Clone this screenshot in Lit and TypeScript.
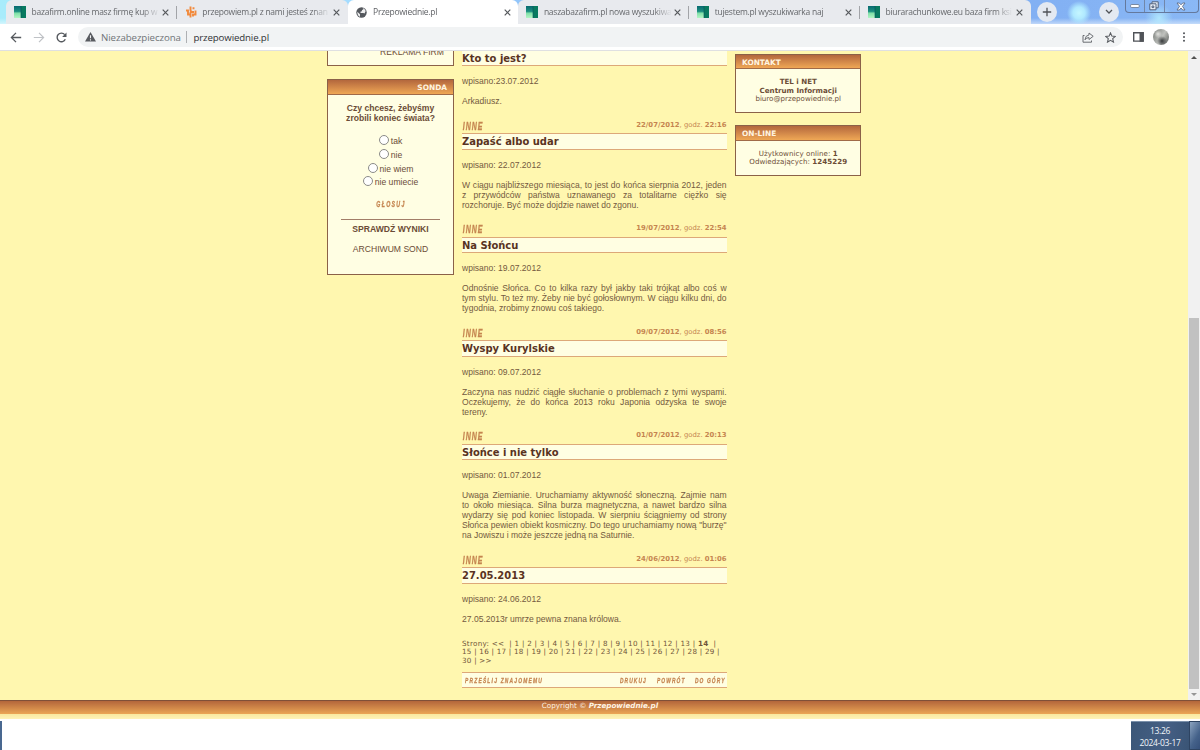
import { LitElement, css, html, nothing } from 'lit'
import { customElement, property } from 'lit/decorators.js'
import { classMap } from 'lit/directives/class-map.js'
import { when } from 'lit/directives/when.js'

const squaresIcon = html`<svg width="12" height="12" viewBox="0 0 12 12">
  <defs><linearGradient id="g" x1="0" y1="0" x2="0" y2="1"><stop offset="0" stop-color="#086a70"/><stop offset=".45" stop-color="#1d8f80"/><stop offset=".6" stop-color="#7fe0a8"/><stop offset="1" stop-color="#b4f5c4"/></linearGradient></defs>
  <path fill="url(#g)" d="M0 0h7v12H0z"/><path fill="#087a60" d="M7 0h5v12H7z"/><path fill="#06555a" d="M6.500 0h1v12h-1z" opacity=".6"/>
</svg>`
const swirlIcon = html`<svg width="12" height="12" viewBox="0 0 12 12" fill="none" stroke="#f28a3c" stroke-width="1.900">
  <path d="M5.500 0.500v3.500q0 2 2 2h1.500M1 4.500h2v4h2.500M5.500 6v5.500M8 7.500v3M10.500 4.500v4H8M8.500 1.200v2"/>
</svg>`
const globeIcon = html`<svg width="11" height="11" viewBox="0 0 11 11">
  <circle cx="5.500" cy="5.500" r="5.200" fill="#54585d"/>
  <path fill="#fff" d="M1.300 4.800 4 7.300v2.500Q1.400 9 1.300 4.800zM6.800 1.100Q9 2 9.700 4L8.500 6.500 7.300 6 5 5.900 4 4.900l1.800-.6.200-1.200 1.300-.6z" opacity=".9"/>
</svg>`
const closeIcon = html`<svg width="7" height="7" viewBox="0 0 7 7" stroke="#55585c" stroke-width="1.200"><path d="M.7.7l5.600 5.600M6.300.7.7 6.300"/></svg>`

interface Tab {
  icon: unknown
  title: string
  active?: boolean
  divider?: boolean
  left?: boolean
  right?: boolean
}

const tabs: Tab[] = [
  { icon: squaresIcon, title: 'bazafirm.online masz firmę kup w', divider: true, left: true },
  { icon: swirlIcon, title: 'przepowiem.pl z nami jesteś znan', right: true },
  { icon: globeIcon, title: 'Przepowiednie.pl', active: true },
  { icon: squaresIcon, title: 'naszabazafirm.pl nowa wyszukiwa', divider: true, left: true },
  { icon: squaresIcon, title: 'tujestem.pl wyszukiwarka naj', divider: true },
  { icon: squaresIcon, title: 'biurarachunkowe.eu baza firm ksi', right: true },
]

interface Entry {
  title: string
  date?: string
  hour?: string
  added: string
  lines: string[]
}

const entries: Entry[] = [
  { title: 'Kto to jest?', added: 'wpisano:23.07.2012', lines: ['Arkadiusz.'] },
  {
    title: 'Zapaść albo udar', date: '22/07/2012', hour: '22:16', added: 'wpisano: 22.07.2012',
    lines: ['W ciągu najbliższego miesiąca, to jest do końca sierpnia 2012, jeden', 'z przywódców państwa uznawanego za totalitarne ciężko się', 'rozchoruje. Być może dojdzie nawet do zgonu.'],
  },
  {
    title: 'Na Słońcu', date: '19/07/2012', hour: '22:54', added: 'wpisano: 19.07.2012',
    lines: ['Odnośnie Słońca. Co to kilka razy był jakby taki trójkąt albo coś w', 'tym stylu. To też my. Żeby nie być gołosłownym. W ciągu kilku dni, do', 'tygodnia, zrobimy znowu coś takiego.'],
  },
  {
    title: 'Wyspy Kurylskie', date: '09/07/2012', hour: '08:56', added: 'wpisano: 09.07.2012',
    lines: ['Zaczyna nas nudzić ciągłe słuchanie o problemach z tymi wyspami.', 'Oczekujemy, że do końca 2013 roku Japonia odzyska te swoje', 'tereny.'],
  },
  {
    title: 'Słońce i nie tylko', date: '01/07/2012', hour: '20:13', added: 'wpisano: 01.07.2012',
    lines: ['Uwaga Ziemianie. Uruchamiamy aktywność słoneczną. Zajmie nam', 'to około miesiąca. Silna burza magnetyczna, a nawet bardzo silna', 'wydarzy się pod koniec listopada. W sierpniu ściągniemy od strony', 'Słońca pewien obiekt kosmiczny. Do tego uruchamiamy nową "burzę"', 'na Jowiszu i może jeszcze jedną na Saturnie.'],
  },
  { title: '27.05.2013', date: '24/06/2012', hour: '01:06', added: 'wpisano: 24.06.2012', lines: ['27.05.2013r umrze pewna znana królowa.'] },
]

@customElement('news-entry')
export class NewsEntry extends LitElement {
  @property({ attribute: false }) entry!: Entry

  render() {
    const { title, date, hour, added, lines } = this.entry
    return html`
      ${when(date, () => html`
        <div class="head">
          <span class="category">INNE</span>
          <span class="date"><b>${date}</b>, godz. <b>${hour}</b></span>
        </div>`)}
      <div class="title">${title}</div>
      <div class="body">
        <p class="line added">${added}</p>
        ${lines.map((line, i) => html`<p class=${classMap({ line: true, full: i < lines.length - 1 })}>${line}</p>`)}
      </div>
    `
  }

  static styles = css`
    :host { display: block; padding-bottom: 11.6px; }
    .head {
      display: flex;
      justify-content: space-between;
      height: 15.3px;
      color: #c58550;
    }
    .category {
      font: italic bold 10.600px/17px "Liberation Sans", sans-serif;
      letter-spacing: 1.600px;
      padding-left: 1px;
      transform: scaleX(.66);
      transform-origin: left;
      -webkit-text-stroke: .3px #c58550;
    }
    .date { font: 6.860px/15px "DejaVu Sans", sans-serif; white-space: nowrap; }
    .title {
      box-sizing: border-box;
      height: 16.6px;
      border: solid #dda878;
      border-width: 1px 0;
      background: #fffee2;
      color: #59331f;
      font: bold 9.980px/15.800px "DejaVu Sans", sans-serif;
    }
    .body { padding-top: 10.050px; color: #745a40; }
    .line { margin: 0; font: 8.560px/10px "Liberation Sans", sans-serif; white-space: nowrap; }
    .added { margin-bottom: 10px; }
    .full { text-align: justify; text-align-last: justify; white-space: normal; }
  `
}

@customElement('side-box')
export class SideBox extends LitElement {
  @property() heading = ''
  @property() align = 'left'

  render() {
    return html`
      ${this.heading ? html`<div class=${classMap({ heading: true, right: this.align === 'right' })}>${this.heading}</div>` : nothing}
      <slot></slot>
    `
  }

  static styles = css`
    :host {
      display: block;
      box-sizing: border-box;
      border: 1px solid #8b6148;
      background: #fffee3;
      color: #6b4c36;
      text-align: center;
    }
    .heading {
      box-sizing: border-box;
      height: 14.500px;
      padding: 0 6px;
      border-bottom: 1px solid #a06a48;
      background: linear-gradient(#b3673d, #efa755);
      color: #fff5e0;
      font: bold 7.400px/15.500px "DejaVu Sans", sans-serif;
      text-align: left;
    }
    .right { text-align: right; }
  `
}

@customElement('browser-chrome')
export class BrowserChrome extends LitElement {
  renderTab(tab: Tab) {
    return html`<div class=${classMap({ tab: true, active: !!tab.active, divider: !!tab.divider, left: !!tab.left, right: !!tab.right })}>
      <span class="favicon">${tab.icon}</span>
      <span class="name">${tab.title}</span>
      <span class="close">${closeIcon}</span>
    </div>`
  }

  render() {
    return html`
      <div class="strip">
        ${tabs.map(tab => this.renderTab(tab))}
        <span class="round plus"><svg width="10" height="10" viewBox="0 0 10 10" stroke="#505358" stroke-width="1.300"><path d="M5 .8v8.400M.8 5h8.400"/></svg></span>
        <span class="round more"><svg width="8" height="6" viewBox="0 0 8 6" fill="none" stroke="#505358" stroke-width="1.300"><path d="M1 1l3 3 3-3"/></svg></span>
        <div class="controls">
          <span><svg width="10" height="6" viewBox="0 0 10 6"><rect x=".6" y="1.500" width="8.600" height="3" rx="1" fill="#fff" stroke="#64748c" stroke-width=".8"/></svg></span>
          <span><svg width="10" height="10" viewBox="0 0 10 10" fill="#e9f0f8" stroke="#52627c" stroke-width="1"><path d="M3 .8h6.200v6H3z"/><path d="M.8 2.800h6.200v6H.8z"/><path d="M3 5h1.800v1.600H3z"/></svg></span>
          <span><svg width="10" height="9" viewBox="0 0 10 9" fill="#fff" stroke="#5d6c86" stroke-width=".9"><path d="M1 1h2.300L5 2.800 6.700 1H9L6.500 4.400 9 8H6.700L5 6 3.300 8H1l2.500-3.600z"/></svg></span>
        </div>
      </div>
      <div class="toolbar">
        <svg class="back" width="12" height="11" viewBox="0 0 12 11" fill="none" stroke="#55595e" stroke-width="1.300"><path d="M11.200 5.500H1.500M6 .9 1.400 5.500 6 10.100"/></svg>
        <svg class="forward" width="12" height="11" viewBox="0 0 12 11" fill="none" stroke="#bfc2c6" stroke-width="1.200"><path d="M.8 5.500h9.700M6 .9l4.600 4.600L6 10.100"/></svg>
        <svg class="reload" width="11" height="11" viewBox="0 0 11 11" fill="none" stroke="#55595e" stroke-width="1.400"><path d="M9.300 7.300A4.300 4.300 0 1 1 8.700 2.600"/><path d="M10.500.5v4.400H6.100z" fill="#55595e" stroke="none"/></svg>
        <div class="address">
          <svg class="warn" width="11" height="10" viewBox="0 0 11 10"><path d="M5.500 0 11 9.600H0z" fill="#585b60"/><path d="M5.500 3.300v3M5.500 7.200v1.200" stroke="#f1f3f4" stroke-width="1.100"/></svg>
          <span class="unsafe">Niezabezpieczona</span>
          <span class="bar"></span>
          <span class="url">przepowiednie.pl</span>
          <svg class="share" width="12" height="11" viewBox="0 0 12 11" fill="none" stroke="#6a6d72" stroke-width="1"><path d="M2.500 3.500H1v6.700h8.500V8.500"/><path d="M7 1l4.200 3.300L7 7.500V5.600Q4.200 5.600 3 7.800 3.300 3.400 7 2.900z"/></svg>
          <svg class="star" width="11" height="11" viewBox="0 0 11 11" fill="none" stroke="#5a5d62" stroke-width="1.100"><path d="M5.500.9l1.400 3.200 3.400.3L7.700 6.700l.8 3.400-3-1.800-3 1.800.8-3.400L.7 4.400l3.400-.3z"/></svg>
        </div>
        <svg class="panel" width="11" height="10" viewBox="0 0 11 10"><path d="M.7.7h9.400v8.400H.7z" fill="none" stroke="#505358" stroke-width="1.400"/><path d="M6.500 0H10.800v9.800H6.500z" fill="#505358"/></svg>
        <span class="avatar"></span>
        <svg class="menu" width="4" height="10" viewBox="0 0 4 10" fill="#505358"><circle cx="2" cy="1.200" r="1"/><circle cx="2" cy="5" r="1"/><circle cx="2" cy="8.800" r="1"/></svg>
      </div>
    `
  }

  static styles = css`
    :host { display: block; font-family: "Open Sans", "Noto Sans", sans-serif; }
    .strip {
      display: flex;
      height: 24px;
      padding-left: 6px;
      background:
        radial-gradient(circle 12px at 1079px 13px, #c4f6ff, #b0e9ff 50%, #b0e9ff00),
        radial-gradient(circle 14px at 1159px 18px, #b8f0ffd0, #b0e9ff00),
        linear-gradient(#0000 75%, #ffffff80),
        linear-gradient(90deg, #a8ecfb 0, #a5ddff 340px, #8abbf8 600px, #82b0f3 1040px, #8ab8f5);
      overflow: hidden;
    }
    .tab {
      display: flex;
      align-items: center;
      box-sizing: border-box;
      width: 170.800px;
      height: 24px;
      padding: 0 7px 0 8px;
      background: #e8eaee;
      color: #66686c;
      flex: none;
    }
    .tab.left { border-top-left-radius: 6px; }
    .tab.right { border-top-right-radius: 6px; }
    .active { background: #fff; border-radius: 6px 6px 0 0; color: #606266; }
    .divider { background: linear-gradient(#a2a4a8, #a2a4a8) right 6px / 1px 13px no-repeat #e8eaee; }
    .favicon { display: flex; width: 17.500px; }
    .name {
      width: 128px;
      white-space: nowrap;
      font-size: 8.500px;
      letter-spacing: -.25px;
      line-height: 24px;
      mask-image: linear-gradient(90deg, #000 110px, #0000 128px);
    }
    .close { display: flex; margin-left: 2.500px; }
    .round {
      display: flex;
      align-items: center;
      justify-content: center;
      width: 20px;
      height: 20px;
      margin-top: 2px;
      border-radius: 50%;
      background: #e4e9f1;
    }
    .plus { margin-left: 6px; }
    .more { margin-left: 42px; }
    .controls {
      display: flex;
      box-sizing: border-box;
      width: 74px;
      height: 13px;
      margin-left: 6px;
      border: 1px solid #64799d;
      border-top: 0;
      border-radius: 0 0 4px 4px;
    }
    .controls span { display: flex; align-items: center; justify-content: center; width: 19px; border-right: 1px solid #7187aa; }
    .controls span:last-child { width: 34px; border: 0; }
    .toolbar {
      display: flex;
      align-items: center;
      box-sizing: border-box;
      height: 27px;
      padding: 0 0 0 9.500px;
      border-bottom: 1px solid #dfe0e2;
      background: #fff;
    }
    .forward { margin-left: 11px; }
    .reload { margin-left: 11px; }
    .address {
      display: flex;
      align-items: center;
      box-sizing: border-box;
      width: 1045px;
      height: 20px;
      margin-left: 11px;
      padding: 0 7px;
      border-radius: 10px;
      background: #f1f3f4;
      font-size: 9.700px;
      letter-spacing: -.08px;
    }
    .unsafe { width: 80px; margin-left: 5.500px; color: #707378; white-space: nowrap; }
    .bar { width: 1px; height: 12px; margin-left: 4.500px; background: #aeb0b3; }
    .url { margin-left: 7px; color: #303236; letter-spacing: -.14px; }
    .share { margin-left: auto; }
    .star { margin-left: 11px; }
    .panel { margin-left: 10.500px; }
    .avatar {
      width: 16px;
      height: 16px;
      margin: 0 13px 0 9px;
      border-radius: 50%;
      background:
        radial-gradient(circle 4px at 5px 5px, #e2e2df, #e2e2df00),
        radial-gradient(circle 5px at 9px 12px, #35383a, #35383a00),
        linear-gradient(120deg, #767a76, #bfc1bd 55%, #555956);
    }
  `
}

@customElement('app-root')
export class AppRoot extends LitElement {
  renderPoll() {
    return html`<side-box class="poll" heading="SONDA" align="right">
      <div class="question">Czy chcesz, żebyśmy<br>zrobili koniec świata?</div>
      <div class="answers">
        ${['tak', 'nie', 'nie wiem', 'nie umiecie'].map(answer => html`<label class="answer"><span class="radio"></span><span>${answer}</span></label>`)}
      </div>
      <div class="vote"><span class="narrow">GŁOSUJ</span></div>
      <div class="results">SPRAWDŹ WYNIKI</div>
      <div class="archive">ARCHIWUM SOND</div>
    </side-box>`
  }

  renderPages() {
    return html`<div class="pages">
      <div class="p1">Strony: &lt;&lt;&nbsp; | 1 | 2 | 3 | 4 | 5 | 6 | 7 | 8 | 9 | 10 | 11 | 12 | 13 | <b>14</b>&nbsp; |</div>
      <div class="p2">15 | 16 | 17 | 18 | 19 | 20 | 21 | 22 | 23 | 24 | 25 | 26 | 27 | 28 | 29 |</div>
      <div class="p3">30 | &gt;&gt;</div>
    </div>`
  }

  render() {
    return html`
      <browser-chrome></browser-chrome>
      <div class="view">
        <main class="columns">
          <aside class="side">
            <side-box class="ads">REKLAMA FIRM</side-box>
            ${this.renderPoll()}
          </aside>
          <section class="news">
            ${entries.map(entry => html`<news-entry .entry=${entry}></news-entry>`)}
            ${this.renderPages()}
            <div class="actions">
              <span class="narrow send">PRZEŚLIJ ZNAJOMEMU</span>
              <span class="narrow print">DRUKUJ</span>
              <span class="narrow return">POWRÓT</span>
              <span class="narrow top">DO GÓRY</span>
            </div>
          </section>
          <aside class="side contact">
            <side-box class="kontakt" heading="KONTAKT">
              <div class="info"><b>TEL i NET<br>Centrum Informacji</b><br>biuro@przepowiednie.pl</div>
            </side-box>
            <side-box class="online" heading="ON-LINE">
              <div class="info">Użytkownicy online: <b>1</b><br>Odwiedzających: <b>1245229</b></div>
            </side-box>
          </aside>
        </main>
        <div class="scroll">
          <span class="arrow"></span>
          <span class="thumb"></span>
          <span class="arrow down"></span>
        </div>
      </div>
      <footer class="footer"><span class="copy">Copyright © <b><i>Przepowiednie.pl</i></b></span></footer>
      <div class="under"></div>
      <div class="taskbar">
        <span class="edge"></span>
        <div class="clock"><span>13:26</span><span>2024-03-17</span></div>
        <span class="desktop"></span>
      </div>
    `
  }

  static styles = css`
    :host { display: flex; flex-direction: column; width: 1200px; height: 750px; overflow: hidden; background: #fff; }
    .view { display: flex; height: 649px; background: #fff7af; overflow: hidden; flex: none; }
    .columns { display: flex; align-items: flex-start; width: 1188px; height: 649px; padding-left: 327px; box-sizing: border-box; }
    .side { display: flex; flex-direction: column; width: 127px; }
    .ads {
      height: 20px;
      margin-top: -4.700px;
      padding: .7px 9px 0;
      font: 8.600px/9px "Liberation Sans", sans-serif;
      text-align: right;
    }
    .poll { height: 196px; margin-top: 12.800px; font: 8.600px/10px "Liberation Sans", sans-serif; }
    .question { margin-top: 8.500px; font-weight: bold; }
    .answers { display: flex; flex-direction: column; align-items: center; margin-top: 10.500px; }
    .answer { display: flex; align-items: center; gap: 2px; height: 13.600px; }
    .answer span:last-child { padding-top: 2px; }
    .radio { box-sizing: border-box; width: 10px; height: 10px; border: 1px solid #8b8b88; border-radius: 50%; background: #fff; }
    .narrow {
      display: inline-block;
      flex: none;
      color: #c58550;
      font: italic bold 8px/10px "Liberation Sans", sans-serif;
      letter-spacing: 1.800px;
      white-space: nowrap;
      transform: scaleX(.61);
      transform-origin: left;
      -webkit-text-stroke: .3px #c58550;
    }
    .vote { margin-top: 11.500px; }
    .vote .narrow { font-size: 8.600px; letter-spacing: 2.100px; transform-origin: center; }
    .results { margin: 9.500px 13px 0; padding-top: 4px; border-top: 1px solid #a27d68; font-weight: bold; }
    .archive { margin-top: 10px; }
    .news { width: 264.600px; margin: -1.500px 0 0 8px; flex: none; }
    .pages { color: #70543a; font: 7.200px/8.600px "DejaVu Sans", sans-serif; white-space: nowrap; margin-top: 4.300px; }
    .p1 { letter-spacing: .263px; }
    .p2, .p3 { letter-spacing: .243px; }
    .actions {
      display: flex;
      box-sizing: border-box;
      height: 16px;
      margin-top: 7px;
      padding: 3px 3px 0;
      border: solid #dda878;
      border-width: 1px 0;
      background: #fffee2;
    }
    .send { width: 155px; letter-spacing: 2px; }
    .print { width: 36.500px; }
    .return { width: 38.500px; }
    .contact { width: 126.500px; margin-left: 8.400px; }
    .kontakt { height: 59px; margin-top: 2.700px; }
    .online { height: 51px; margin-top: 12.500px; }
    .info { margin-top: 9px; font: 7.100px/8.600px "DejaVu Sans", sans-serif; }
    .online .info { letter-spacing: .05px; }
    .scroll { display: flex; flex-direction: column; align-items: center; box-sizing: border-box; width: 12px; height: 649px; background: #f1f1f1; padding: 5px 0 4px; }
    .arrow { border: 3px solid transparent; border-top: 0; border-bottom: 3px solid #505050; }
    .thumb { width: 10px; height: 371px; margin-top: 259px; background: #c1c1c1; }
    .down { border-top: 3px solid #969696; border-bottom: 0; margin-top: auto; }
    .footer {
      box-sizing: border-box;
      height: 14px;
      border-top: 1px solid #805038;
      background: linear-gradient(#b3663b, #eba655);
      color: #fff4e4;
      font: 7.180px/10.500px "DejaVu Sans", sans-serif;
      text-align: center;
      flex: none;
    }
    .under { height: 5px; background: linear-gradient(#f9e99e, #fff3b8); flex: none; }
    .taskbar { display: flex; height: 31px; background: #fff; }
    .edge { width: 2px; margin: 2px auto 0 0; background: #496890; }
    .clock {
      display: flex;
      flex-direction: column;
      align-items: center;
      width: 58px;
      margin-top: 2px;
      padding-top: 3px;
      box-sizing: border-box;
      border-top: 1px solid #7b91ab;
      background: linear-gradient(100deg, #3c5778, #445f84 60%, #3a5475);
      color: #f1f5fa;
      font: 8.500px/12px "Open Sans", sans-serif;
      letter-spacing: -.35px;
    }
    .desktop { width: 11px; box-sizing: border-box; margin-top: 2px; border: 1px solid #2e4462; border-right: 0; background: linear-gradient(120deg, #8ba3bf, #45628a 60%, #35507a); }
  `
}
